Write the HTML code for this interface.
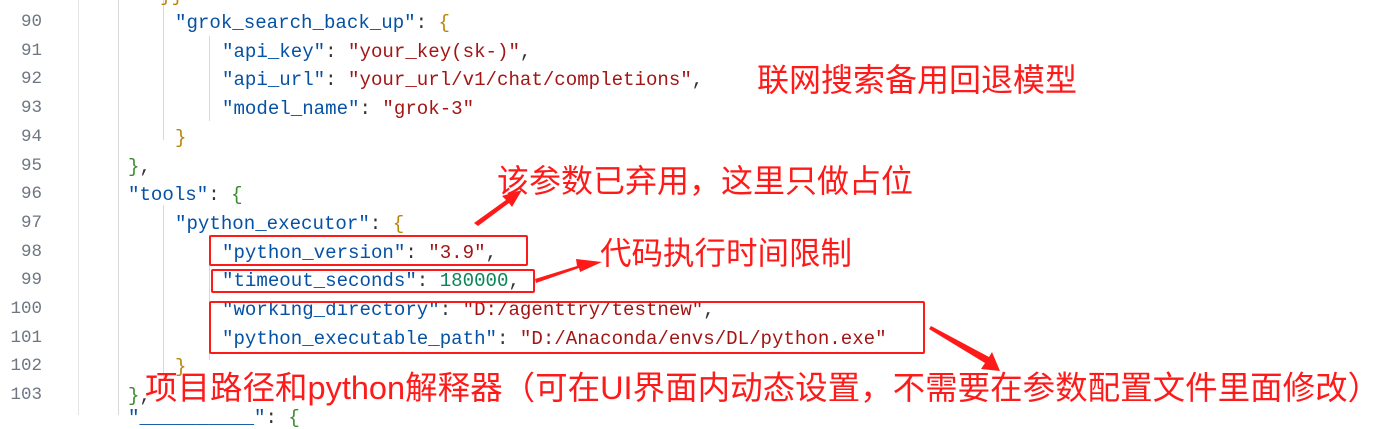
<!DOCTYPE html>
<html><head><meta charset="utf-8"><style>
body{margin:0;width:1395px;height:415px;background:#fff;overflow:hidden;position:relative;font-family:"Liberation Mono",monospace;}
.ln{position:absolute;left:0;width:42px;text-align:right;color:#6e7681;font-size:17.5px;font-family:"Liberation Mono",monospace;}
.c{position:absolute;font-size:19.1px;white-space:pre;color:#333;}
.k{color:#0451a5}.s{color:#a31515}.n{color:#098658}.y{color:#b8860b}.g{color:#3a8c2f}
.vl{position:absolute;width:1px;background:#d8d8d8;}
.a{position:absolute;color:#ff1a1a;font-family:"Liberation Sans","Noto Sans CJK SC",sans-serif;white-space:nowrap;line-height:1;}
.box{position:absolute;border:2px solid #ff1a1a;border-radius:2px;}
</style></head><body>
<div class="vl" style="left:78px;top:0;height:415px;background:#e4e4e4"></div>
<div class="vl" style="left:118px;top:0;height:415px"></div>
<div class="vl" style="left:163px;top:0;height:140px"></div>
<div class="vl" style="left:163px;top:205px;height:175px"></div>
<div class="vl" style="left:209px;top:36px;height:85px"></div>
<div class="vl" style="left:209px;top:235px;height:125px"></div>

<div class="ln" style="top:12px">90</div>
<div class="ln" style="top:41px">91</div>
<div class="ln" style="top:69px">92</div>
<div class="ln" style="top:98px">93</div>
<div class="ln" style="top:127px">94</div>
<div class="ln" style="top:156px">95</div>
<div class="ln" style="top:184px">96</div>
<div class="ln" style="top:213px">97</div>
<div class="ln" style="top:242px">98</div>
<div class="ln" style="top:270px">99</div>
<div class="ln" style="top:299px">100</div>
<div class="ln" style="top:328px">101</div>
<div class="ln" style="top:356px">102</div>
<div class="ln" style="top:385px">103</div>

<div class="c" style="left:160px;top:-15px"><span class="y">}}</span></div>
<div class="c" style="left:175px;top:12px"><span class="k">"grok_search_back_up"</span>: <span class="y">{</span></div>
<div class="c" style="left:222px;top:41px"><span class="k">"api_key"</span>: <span class="s">"your_key(sk-)"</span>,</div>
<div class="c" style="left:222px;top:69px"><span class="k">"api_url"</span>: <span class="s">"your_url/v1/chat/completions"</span>,</div>
<div class="c" style="left:222px;top:98px"><span class="k">"model_name"</span>: <span class="s">"grok-3"</span></div>
<div class="c" style="left:175px;top:127px"><span class="y">}</span></div>
<div class="c" style="left:128px;top:156px"><span class="g">}</span>,</div>
<div class="c" style="left:128px;top:184px"><span class="k">"tools"</span>: <span class="g">{</span></div>
<div class="c" style="left:175px;top:213px"><span class="k">"python_executor"</span>: <span class="y">{</span></div>
<div class="c" style="left:222px;top:242px"><span class="k">"python_version"</span>: <span class="s">"3.9"</span>,</div>
<div class="c" style="left:222px;top:270px"><span class="k">"timeout_seconds"</span>: <span class="n">180000</span>,</div>
<div class="c" style="left:222px;top:299px"><span class="k">"working_directory"</span>: <span class="s">"D:/agenttry/testnew"</span>,</div>
<div class="c" style="left:222px;top:328px"><span class="k">"python_executable_path"</span>: <span class="s">"D:/Anaconda/envs/DL/python.exe"</span></div>
<div class="c" style="left:175px;top:356px"><span class="y">}</span></div>
<div class="c" style="left:128px;top:385px"><span class="g">}</span>,</div>
<div class="c" style="left:128px;top:407px"><span class="k">"__________"</span>: <span class="g">{</span></div>

<div class="box" style="left:209px;top:235px;width:315px;height:27px"></div>
<div class="box" style="left:211px;top:269px;width:320px;height:20px"></div>
<div class="box" style="left:209px;top:301px;width:712px;height:49px"></div>

<svg style="position:absolute;left:0;top:0" width="1395" height="415">
<polygon points="474,223 506,200 502,196 522,190 512,207 509,203 478,226" fill="#ff1a1a"/>
<polygon points="535,279 577,266 576,259 602,262 580,272 579,268 536,283" fill="#ff1a1a"/>
<polygon points="931,326 989,357 992,352 1000,371 981,369 985,363 929,329" fill="#ff1a1a"/>
</svg>

<div class="a" style="left:757px;top:64px;font-size:32px">联网搜索备用回退模型</div>
<div class="a" style="left:497px;top:165px;font-size:32px">该参数已弃用，这里只做占位</div>
<div class="a" style="left:600px;top:238px;font-size:31.5px">代码执行时间限制</div>
<div class="a" style="left:145px;top:372px;font-size:32.5px">项目路径和python解释器（可在UI界面内动态设置，不需要在参数配置文件里面修改）</div>
</body></html>
